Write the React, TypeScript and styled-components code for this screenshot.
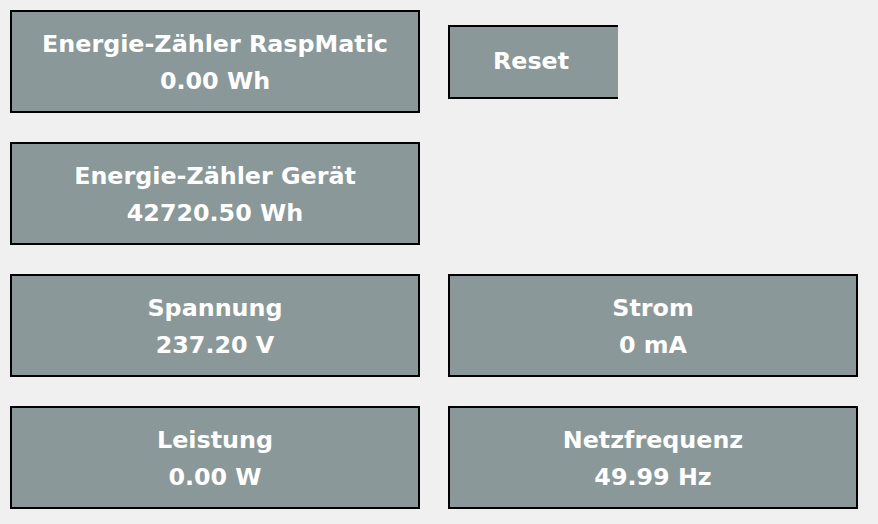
import React from "react";
import styled, { createGlobalStyle } from "styled-components";

const GlobalStyle = createGlobalStyle`
  html, body {
    margin: 0;
    padding: 0;
    background-color: #f0f0f0;
  }
  body {
    font-family: "DejaVu Sans", Verdana, sans-serif;
  }
`;

const Panel = styled.div`
  display: grid;
  grid-template-columns: 410px 410px;
  grid-auto-rows: 103px;
  column-gap: 28px;
  row-gap: 29px;
  padding: 10px;
`;

const ValueBox = styled.div`
  box-sizing: border-box;
  background-color: #8a9899;
  border: 2px solid #000;
  display: flex;
  flex-direction: column;
  align-items: center;
  justify-content: center;
  color: #fff;
  font-weight: bold;
  font-size: 23.8px;
  line-height: 37px;
  padding-top: 2px;
`;

const ButtonCell = styled.div`
  display: flex;
  align-items: center;
`;

const ResetButton = styled.button`
  box-sizing: border-box;
  width: 170px;
  height: 74px;
  background-color: #8a9899;
  border: 2px solid #000;
  border-right: none;
  color: #fff;
  font-family: "DejaVu Sans", Verdana, sans-serif;
  font-weight: bold;
  font-size: 23.8px;
  padding: 0 6px 2px 0;
  text-align: center;
  cursor: pointer;
`;

const Empty = styled.div``;

type Reading = { label: string; value: string };

const readings: Reading[] = [
  { label: "Energie-Zähler Gerät", value: "42720.50 Wh" },
  { label: "Spannung", value: "237.20 V" },
  { label: "Strom", value: "0 mA" },
  { label: "Leistung", value: "0.00 W" },
  { label: "Netzfrequenz", value: "49.99 Hz" },
];

function Tile({ label, value }: Reading) {
  return (
    <ValueBox>
      <span>{label}</span>
      <span>{value}</span>
    </ValueBox>
  );
}

export default function App() {
  return (
    <>
      <GlobalStyle />
      <Panel>
        <Tile label="Energie-Zähler RaspMatic" value="0.00 Wh" />
        <ButtonCell>
          <ResetButton>Reset</ResetButton>
        </ButtonCell>
        <Tile {...readings[0]} />
        <Empty />
        {readings.slice(1).map((r) => (
          <Tile key={r.label} {...r} />
        ))}
      </Panel>
    </>
  );
}
